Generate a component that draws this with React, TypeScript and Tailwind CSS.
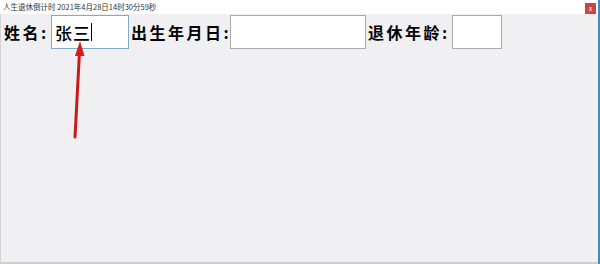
import React from 'react';

const cjk = { fontFamily: '"Noto Sans CJK SC", sans-serif' };

function Field({ label, labelW, width, value, focused }: { label: string; labelW: string; width: string; value?: string; focused?: boolean }) {
  return (
    <div className="flex items-center">
      <span className={'text-[16px] font-semibold text-black leading-none tracking-[2.5px] whitespace-nowrap ' + labelW}>{label}</span>
      <div
        className={
          'h-[34px] bg-white border flex items-center pl-[3px] ' +
          width +
          (focused ? ' border-[#7fadc4]' : ' border-[#aaaaaa]')
        }
      >
        {value && <span className="text-[17px] text-black font-medium leading-none tracking-[1px]">{value}</span>}
        {focused && <span className="w-px h-[18px] bg-black" />}
      </div>
    </div>
  );
}

export default function App() {
  return (
    <div className="relative w-[600px] h-[264px] overflow-hidden bg-white" style={cjk}>
      <div className="flex flex-col h-full border-r-2 border-[#3d8fbf]">
        {/* title bar */}
        <div className="h-[14px] bg-white flex items-center justify-between pl-[3px] pr-[2px]">
          <span className="text-[7.5px] text-[#333] leading-none">人生退休倒计时 2021年4月28日14时30分59秒</span>
          <div className="w-[11px] h-[11px] bg-[#c8454a] flex items-center justify-center mt-[3px]">
            <span className="text-[7px] text-white leading-none">x</span>
          </div>
        </div>

        {/* body */}
        <div className="flex-1 bg-[#f0eff1] border-l border-[#d4d4d4] border-b-2 border-b-[#cfcfcf] pl-[3px] pt-px">
          <div className="flex items-center gap-[2px]">
            <Field label="姓名:" labelW="w-[47px]" width="w-[78px]" value="张三" focused />
            <Field label="出生年月日:" labelW="w-[99px]" width="w-[136px]" />
            <Field label="退休年龄:" labelW="w-[84px]" width="w-[50px]" />
          </div>
        </div>
      </div>

      {/* red annotation arrow */}
      <svg className="absolute left-0 top-0 pointer-events-none" width="600" height="264">
        <line x1="75" y1="137" x2="79.5" y2="52" stroke="#c81a1a" strokeWidth="3" strokeLinecap="round" />
        <polygon points="80,41 75,56 84.5,56" fill="#d41e1e" />
      </svg>
    </div>
  );
}
